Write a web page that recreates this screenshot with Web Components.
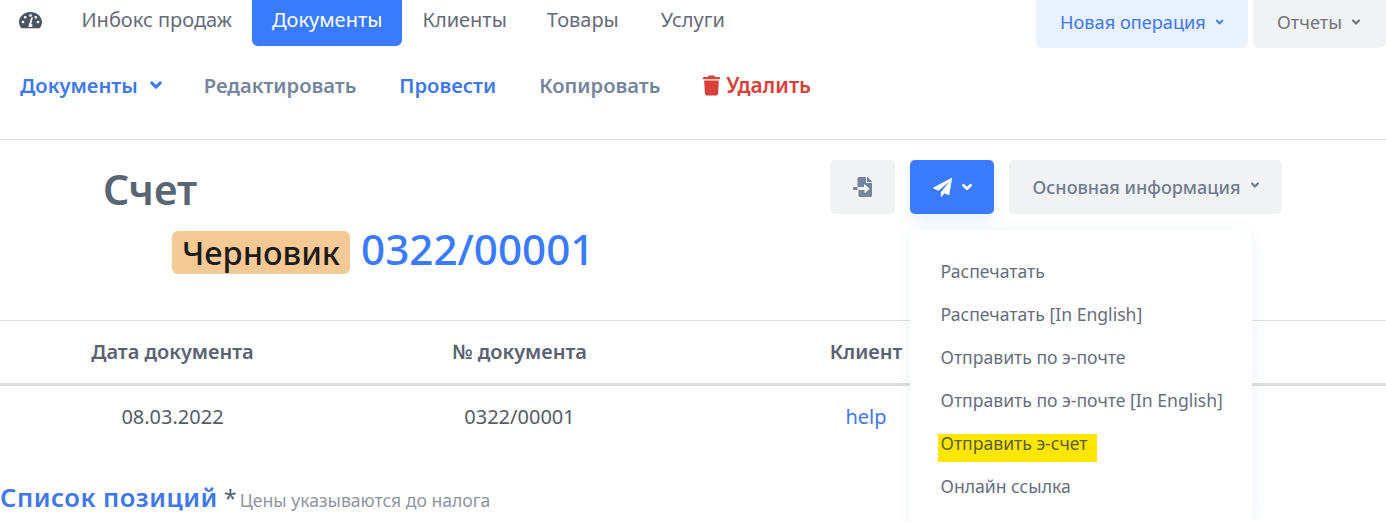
<!DOCTYPE html>
<html lang="ru">
<head>
<meta charset="utf-8">
<title>Счет</title>
<style>
  html, body { margin: 0; padding: 0; background: #fff; }
  body { width: 1386px; height: 522px; overflow: hidden; font-family: "Noto Sans", "Open Sans", sans-serif; }
</style>
</head>
<body>
<app-topnav></app-topnav>
<doc-tabs></doc-tabs>
<doc-header></doc-header>
<doc-table></doc-table>
<items-title></items-title>

<script>
const chevron = (color, size = 10) => `<svg width="${size}" height="${size}" viewBox="0 0 10 10" fill="none" stroke="${color}" stroke-width="2.2" stroke-linecap="round" stroke-linejoin="round"><path d="M2 3.5 5 6.5 8 3.5"/></svg>`;

class AppTopnav extends HTMLElement {
  constructor() {
    super();
    const shadow = this.attachShadow({ mode: "open" });
    shadow.innerHTML = `
      <style>
        :host { display: flex; height: 46px; padding-left: 19px; font-size: 20px; color: #666b78; box-sizing: border-box; }
        * { box-sizing: border-box; }
        .gauge { width: 23px; height: 40px; display: flex; align-items: center; margin-right: 39.5px; }
        a { display: flex; align-items: center; height: 46px; padding: 0 20px 8px; white-space: nowrap; }
        a.active { background: #3a7bfd; color: #fff; border-radius: 0 0 6px 6px; }
        a.first { padding-left: 0; padding-right: 20px; }
        a.last { margin-left: 2px; }
        .right { margin-left: auto; display: flex; gap: 5px; padding-right: 0; font-size: 18.2px; }
        button { all: unset; display: flex; align-items: center; gap: 9px; height: 48px; padding: 0 24px 4px; border-radius: 0 0 6px 6px; white-space: nowrap; }
        .new { background: #e9f0fe; color: #3f78e8; width: 212px; box-sizing: border-box; }
        .rep { background: #f1f2f4; color: #6f747d; width: 133px; box-sizing: border-box; }
      </style>
      <span class="gauge">
        <svg width="23" height="17" viewBox="0 0 23 19" preserveAspectRatio="none"><path fill="#4a5563" fill-rule="evenodd" d="M11.5 0C5.1 0 0 5 0 11.3c0 2.3.7 4.5 1.9 6.3.3.4.7.6 1.1.6h17c.4 0 .8-.2 1.1-.6 1.2-1.8 1.9-4 1.9-6.3C23 5 17.900 0 11.5 0ZM4 12.600a1.400 1.400 0 1 1 0-2.800 1.400 1.400 0 0 1 0 2.800Zm2.200-5.200a1.400 1.400 0 1 1 0-2.800 1.400 1.400 0 0 1 0 2.800Zm5.300-2.200a1.400 1.400 0 1 1 0-2.800 1.400 1.400 0 0 1 0 2.800Zm1.900 8.600-.2 3H9.400l.4-1.900 2.400-8.600c.1-.4.6-.6 1-.5.4.1.7.6.6 1l-1.700 6.900c.4 0 .7.100 1 .1Zm3.400-6.400a1.400 1.400 0 1 1 0-2.800 1.400 1.400 0 0 1 0 2.800Zm2.200 5.200a1.400 1.400 0 1 1 0-2.800 1.400 1.400 0 0 1 0 2.800Z"/></svg>
      </span>
      <a class="first">Инбокс продаж</a>
      <a class="active">Документы</a>
      <a>Клиенты</a>
      <a>Товары</a>
      <a class="last">Услуги</a>
      <div class="right">
        <button class="new">Новая операция ${chevron("#3f78e8")}</button>
        <button class="rep">Отчеты ${chevron("#6f747d")}</button>
      </div>
    `;
  }
}

class DocTabs extends HTMLElement {
  constructor() {
    super();
    const shadow = this.attachShadow({ mode: "open" });
    shadow.innerHTML = `
      <style>
        :host { display: flex; align-items: center; gap: 43px; height: 94px; padding: 0 0 15px 20px; box-sizing: border-box; font-size: 20.2px; font-weight: 600; color: #75859c; border-bottom: 1px solid #dedede; }
        span { white-space: nowrap; display: flex; align-items: center; }
        .blue { color: #3f78e8; }
        .red { color: #d8413a; gap: 6px; font-size: 20.8px; }
        .drop { gap: 11px; }
        .drop svg { margin-right: -2px; }
      </style>
      <span class="blue drop">Документы ${chevron("#3f78e8", 14)}</span>
      <span>Редактировать</span>
      <span class="blue">Провести</span>
      <span>Копировать</span>
      <span class="red">
        <svg width="17" height="21" viewBox="0 0 18 21"><path fill="#d8413a" d="M6 0h6l.8 1.600H17c.6 0 1 .4 1 1v.9c0 .3-.2.5-.5.5H.5C.2 4 0 3.800 0 3.500v-.9c0-.6.4-1 1-1h4.200L6 0ZM1.200 5.300h15.600L16 19c0 1.100-.9 2-2 2H4c-1.100 0-2-.9-2-2L1.200 5.300Z"/></svg>
        Удалить
      </span>
    `;
  }
}

class SendMenu extends HTMLElement {
  constructor() {
    super();
    const shadow = this.attachShadow({ mode: "open" });
    shadow.innerHTML = `
      <style>
        :host { position: absolute; left: 910px; top: 230px; width: 342px; height: 292px; background: #fff; border-radius: 6px 6px 0 0; box-shadow: 0 4px 18px rgba(60, 90, 150, .09); box-sizing: border-box; padding-top: 20px; font-size: 17.6px; color: #666d7d; z-index: 5; }
        ::slotted(menu-item) { display: block; }
      </style>
      <slot></slot>
    `;
  }
}

class MenuItem extends HTMLElement {
  constructor() {
    super();
    const shadow = this.attachShadow({ mode: "open" });
    shadow.innerHTML = `
      <style>
        :host { display: block; height: 43px; line-height: 43px; padding-left: 30.5px; white-space: nowrap; position: relative; z-index: 0; }
        :host([marked]) { color: #5a5f35; }
        :host([marked])::before { content: ""; position: absolute; z-index: -1; left: 28px; top: 12px; width: 159px; height: 28px; background: #ffe600; }
      </style>
      <slot></slot>
    `;
  }
}

class DocHeader extends HTMLElement {
  constructor() {
    super();
    const shadow = this.attachShadow({ mode: "open" });
    shadow.innerHTML = `
      <style>
        :host { display: block; height: 180px; box-sizing: border-box; }
        * { box-sizing: border-box; }
        .top { display: flex; height: 74px; padding-top: 20px; padding-left: 103px; }
        h1 { margin: 0; font-size: 41px; line-height: 58px; font-weight: 600; color: #5a6574; }
        .actions { margin-left: auto; margin-right: 104px; display: flex; gap: 15px; }
        button { all: unset; height: 54px; display: flex; align-items: center; justify-content: center; border-radius: 5px; background: #f1f2f4; box-sizing: border-box; white-space: nowrap; }
        .save { width: 65px; }
        .send { width: 84px; gap: 9px; padding-left: 2px; background: #3a7bfd; box-shadow: 0 6px 14px rgba(58, 123, 253, .12); }
        .info { width: 273px; gap: 10px; padding-left: 2px; font-size: 18px; font-weight: 500; color: #6f7c90; }
        .info svg { margin-top: -4px; }
        .sub { display: flex; align-items: center; gap: 11px; padding-left: 172px; margin-top: 8px; height: 60px; }
        .tag { display: flex; align-items: center; justify-content: center; height: 43px; width: 178px; background: #f3c996; border-radius: 6px; font-size: 32.5px; color: #1f1b16; font-weight: 500; }
        .num { font-size: 42.2px; color: #3a7bfd; font-weight: 500; line-height: 1; margin-top: -5px; }
      </style>
      <div class="top">
        <h1>Счет</h1>
        <div class="actions">
          <button class="save">
            <svg width="20" height="20" viewBox="0 0 20 20"><path fill="#75859c" d="M6 0h7v5c0 .6.4 1 1 1h5v12.500c0 .8-.7 1.500-1.500 1.500h-10.500c-.8 0-1.500-.7-1.500-1.500V13h6v2.600c0 .4.500.6.800.3l3.900-3.800c.2-.2.2-.6 0-.8L11.800 7.400c-.3-.3-.8-.1-.8.3V10H4.500V1.500C4.500.7 5.200 0 6 0Zm8.500 0 4.500 4.500V5h-5V0h.5ZM.5 10h4v3h-4a.5.5 0 0 1-.5-.5v-2c0-.3.2-.5.5-.5Z"/></svg>
          </button>
          <button class="send">
            <svg width="19" height="19" viewBox="0 0 19 19"><path fill="#fff" d="M18.300.1c.4-.2.800.1.700.6L16.300 16.700c-.1.400-.500.600-.8.400l-4.200-1.800-2.500 3.200c-.3.400-1 .2-1-.4v-3.800L16.300 3.500 5.600 12.700.4 10.500c-.5-.2-.5-.9 0-1.100L18.300.1Z"/></svg>
            ${chevron("#fff", 12)}
          </button>
          <button class="info">Основная информация ${chevron("#6f7c90")}</button>
        </div>
      </div>
      <div class="sub">
        <span class="tag">Черновик</span>
        <span class="num">0322/00001</span>
      </div>
    `;
  }
}

class DocTable extends HTMLElement {
  constructor() {
    super();
    const shadow = this.attachShadow({ mode: "open" });
    shadow.innerHTML = `
      <style>
        :host { display: block; border-top: 1px solid #dedede; font-size: 20px; color: #555c68; }
        .row { display: grid; grid-template-columns: 345px 349px 344px 1fr; text-align: center; }
        .head { height: 65px; border-bottom: 3px solid #dedede; box-sizing: border-box; line-height: 61px; font-weight: 600; font-size: 20px; color: #596270; }
        .body { height: 66px; line-height: 61px; }
        .link { color: #3f78e8; }
      </style>
      <div class="row head"><span>Дата документа</span><span>№ документа</span><span>Клиент</span><span></span></div>
      <div class="row body"><span>08.03.2022</span><span>0322/00001</span><span class="link">help</span><span></span></div>
    `;
  }
}

class ItemsTitle extends HTMLElement {
  constructor() {
    super();
    const shadow = this.attachShadow({ mode: "open" });
    shadow.innerHTML = `
      <style>
        :host { display: block; white-space: nowrap; line-height: 36px; margin-top: 28px; }
        b { font-size: 25.6px; font-weight: 600; color: #3f78e8; letter-spacing: .5px; }
        .star { font-size: 23px; color: #5a6270; margin-left: 2px; }
        small { font-size: 17.6px; color: #8f959f; margin-left: -1px; }
      </style>
      <b>Список позиций</b> <span class="star">*</span> <small>Цены указываются до налога</small>
    `;
  }
}

customElements.define("app-topnav", AppTopnav);
customElements.define("doc-tabs", DocTabs);
customElements.define("send-menu", SendMenu);
customElements.define("menu-item", MenuItem);
customElements.define("doc-header", DocHeader);
customElements.define("doc-table", DocTable);
customElements.define("items-title", ItemsTitle);

const menu = document.createElement("send-menu");
menu.innerHTML = `
  <menu-item>Распечатать</menu-item>
  <menu-item>Распечатать [In English]</menu-item>
  <menu-item>Отправить по э-почте</menu-item>
  <menu-item>Отправить по э-почте [In English]</menu-item>
  <menu-item marked>Отправить э-счет</menu-item>
  <menu-item>Онлайн ссылка</menu-item>
`;
document.body.appendChild(menu);
</script>
</body>
</html>
